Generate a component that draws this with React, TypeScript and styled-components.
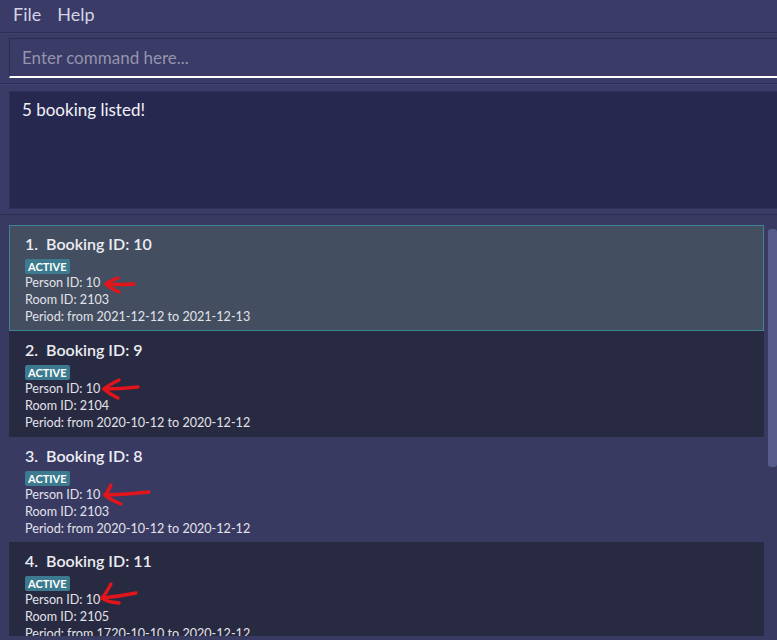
import React from "react";
import styled, { createGlobalStyle } from "styled-components";

const GlobalStyle = createGlobalStyle`
  html, body { margin: 0; padding: 0; background: #3a3b66; overflow: hidden; }
  body { font-family: Lato, "Noto Sans", "DejaVu Sans", sans-serif; }
  * { box-sizing: border-box; }
`;

const Window = styled.div`
  width: 777px;
  height: 640px;
  display: flex;
  flex-direction: column;
  background: #3a3b66;
  overflow: hidden;
`;

const MenuBar = styled.div`
  height: 33px;
  display: flex;
  align-items: center;
  gap: 16px;
  padding: 0 0 4px 13px;
  border-bottom: 1px solid #2d2e54;
  font-size: 18px;
  color: #d4d4e6;
`;

const Section = styled.div<{ $pad: string }>`
  padding: ${(p) => p.$pad};
  border-bottom: 1px solid #2d2e54;
  border-top: 1px solid #3f4070;
`;

const CommandBox = styled.div`
  margin-left: 9px;
  width: 780px;
  height: 40px;
  background: #3a3b66;
  border: 1px solid #2b2c52;
  border-bottom: 2px solid #ffffff;
  display: flex;
  align-items: center;
  padding-left: 12px;
  font-size: 17px;
  color: #9494ad;
`;

const ResultBox = styled.div`
  margin-left: 9px;
  width: 780px;
  height: 118px;
  background: #27284f;
  border: 1px solid #30315a;
  padding: 7px 12px;
  font-size: 17px;
  color: #f2f2f8;
`;

const ListArea = styled.div`
  flex: 1;
  position: relative;
  background: #393a62;
  padding: 10px 13px 0 9px;
  overflow: hidden;
`;

const ListViewport = styled.div`
  height: 411px;
  overflow: hidden;
  display: flex;
  flex-direction: column;
`;

const Card = styled.div<{ $variant: "selected" | "dark" | "plain" }>`
  position: relative;
  flex: 0 0 auto;
  height: ${(p) => (p.$variant === "plain" ? 105 : 106)}px;
  padding: 7px 15px 0 15px;
  background: ${(p) =>
    p.$variant === "selected" ? "#434f60" : p.$variant === "dark" ? "#282a41" : "transparent"};
  border: 1px solid ${(p) => (p.$variant === "selected" ? "#3e8396" : "transparent")};
  color: #e4e4ec;
`;

const Title = styled.div`
  display: flex;
  gap: 8px;
  height: 20px;
  align-items: center;
  font-size: 16px;
  font-weight: 600;
  color: #ececf2;
  margin-bottom: 2px;
`;

const Badge = styled.span`
  display: inline-block;
  height: 15px;
  line-height: 15px;
  padding: 0 3px;
  border-radius: 2px;
  background: #3c7b8f;
  color: #ffffff;
  font-size: 11px;
  font-weight: 700;
`;

const Line = styled.div`
  height: 17px;
  line-height: 17px;
  font-size: 12.6px;
  color: #e2e2ea;
`;

const Scrollbar = styled.div`
  position: absolute;
  right: 0;
  top: 14px;
  width: 9px;
  height: 238px;
  border-radius: 3px;
  background: #585c8c;
`;

const ArrowSvg = styled.svg`
  position: absolute;
  left: 0;
  top: 0;
  width: 100%;
  height: 100%;
  pointer-events: none;
  overflow: visible;
`;

type Pt = [number, number];
interface Arrow { tip: Pt; end: Pt; up: Pt; low: Pt }

const RedArrow = ({ a }: { a: Arrow }) => {
  const [tx, ty] = a.tip;
  const [ex, ey] = a.end;
  const mx = (tx + ex) / 2;
  const my = (ty + ey) / 2 + 1;
  return (
    <ArrowSvg>
      <g fill="none" stroke="#e3151c" strokeWidth={3.4} strokeLinecap="round" strokeLinejoin="round">
        <path d={`M${ex} ${ey} Q${mx} ${my} ${tx} ${ty}`} />
        <path d={`M${a.up[0]} ${a.up[1]} Q${tx + 3} ${ty - 3} ${tx} ${ty} Q${tx + 4} ${ty + 4} ${a.low[0]} ${a.low[1]}`} />
      </g>
    </ArrowSvg>
  );
};

interface Booking {
  n: number;
  id: number;
  room: number;
  period: string;
  variant: "selected" | "dark" | "plain";
  arrow: Arrow;
}

const bookings: Booking[] = [
  { n: 1, id: 10, room: 2103, period: "from 2021-12-12 to 2021-12-13", variant: "selected",
    arrow: { tip: [96, 58], end: [124, 58], up: [108, 52], low: [109, 66] } },
  { n: 2, id: 9, room: 2104, period: "from 2020-10-12 to 2020-12-12", variant: "dark",
    arrow: { tip: [94, 57], end: [128, 55], up: [109, 48], low: [108, 66] } },
  { n: 3, id: 8, room: 2103, period: "from 2020-10-12 to 2020-12-12", variant: "plain",
    arrow: { tip: [95, 57], end: [139, 54], up: [101, 47], low: [111, 66] } },
  { n: 4, id: 11, room: 2105, period: "from 1720-10-10 to 2020-12-12", variant: "dark",
    arrow: { tip: [92, 55], end: [126, 50], up: [101, 41], low: [109, 60] } },
];

export default function App() {
  return (
    <>
      <GlobalStyle />
      <Window>
        <MenuBar>
          <span>File</span>
          <span>Help</span>
        </MenuBar>
        <Section $pad="4px 0 5px 0">
          <CommandBox>Enter command here...</CommandBox>
        </Section>
        <Section $pad="6px 0 5px 0">
          <ResultBox>5 booking listed!</ResultBox>
        </Section>
        <ListArea>
          <ListViewport>
            {bookings.map((b) => (
              <Card key={b.n} $variant={b.variant}>
                <Title>
                  <span>{b.n}.</span>
                  <span>Booking ID: {b.id}</span>
                </Title>
                <div>
                  <Badge>ACTIVE</Badge>
                </div>
                <Line>Person ID: 10</Line>
                <Line>Room ID: {b.room}</Line>
                <Line>Period: {b.period}</Line>
                <RedArrow a={b.arrow} />
              </Card>
            ))}
          </ListViewport>
          <Scrollbar />
        </ListArea>
      </Window>
    </>
  );
}
